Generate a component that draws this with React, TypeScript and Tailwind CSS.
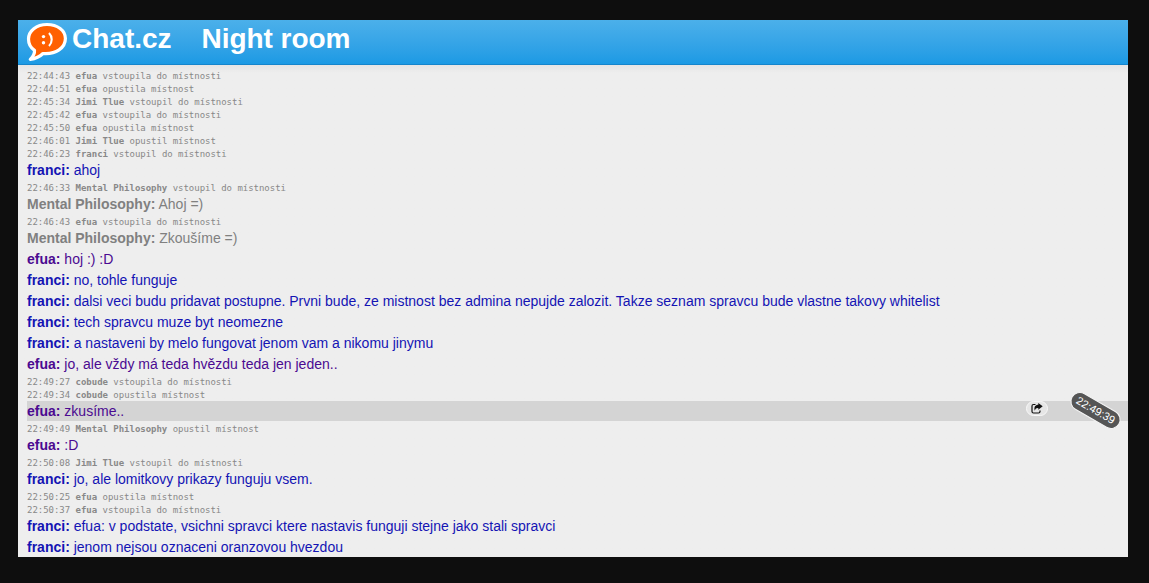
import clsx from 'clsx';

type SystemLine = { kind: 'system'; time: string; user: string; text: string };
type MessageLine = { kind: 'message'; user: string; text: string; time?: string; active?: boolean };
type Line = SystemLine | MessageLine;

const lines: Line[] = [
  { kind: 'system', time: '22:44:43', user: 'efua', text: 'vstoupila do místnosti' },
  { kind: 'system', time: '22:44:51', user: 'efua', text: 'opustila místnost' },
  { kind: 'system', time: '22:45:34', user: 'Jimi Tlue', text: 'vstoupil do místnosti' },
  { kind: 'system', time: '22:45:42', user: 'efua', text: 'vstoupila do místnosti' },
  { kind: 'system', time: '22:45:50', user: 'efua', text: 'opustila místnost' },
  { kind: 'system', time: '22:46:01', user: 'Jimi Tlue', text: 'opustil místnost' },
  { kind: 'system', time: '22:46:23', user: 'franci', text: 'vstoupil do místnosti' },
  { kind: 'message', user: 'franci', text: 'ahoj' },
  { kind: 'system', time: '22:46:33', user: 'Mental Philosophy', text: 'vstoupil do místnosti' },
  { kind: 'message', user: 'Mental Philosophy', text: 'Ahoj =)' },
  { kind: 'system', time: '22:46:43', user: 'efua', text: 'vstoupila do místnosti' },
  { kind: 'message', user: 'Mental Philosophy', text: 'Zkoušíme =)' },
  { kind: 'message', user: 'efua', text: 'hoj :) :D' },
  { kind: 'message', user: 'franci', text: 'no, tohle funguje' },
  {
    kind: 'message',
    user: 'franci',
    text: 'dalsi veci budu pridavat postupne. Prvni bude, ze mistnost bez admina nepujde zalozit. Takze seznam spravcu bude vlastne takovy whitelist',
  },
  { kind: 'message', user: 'franci', text: 'tech spravcu muze byt neomezne' },
  { kind: 'message', user: 'franci', text: 'a nastaveni by melo fungovat jenom vam a nikomu jinymu' },
  { kind: 'message', user: 'efua', text: 'jo, ale vždy má teda hvězdu teda jen jeden..' },
  { kind: 'system', time: '22:49:27', user: 'cobude', text: 'vstoupila do místnosti' },
  { kind: 'system', time: '22:49:34', user: 'cobude', text: 'opustila místnost' },
  { kind: 'message', user: 'efua', text: 'zkusíme..', time: '22:49:39', active: true },
  { kind: 'system', time: '22:49:49', user: 'Mental Philosophy', text: 'opustil místnost' },
  { kind: 'message', user: 'efua', text: ':D' },
  { kind: 'system', time: '22:50:08', user: 'Jimi Tlue', text: 'vstoupil do místnosti' },
  { kind: 'message', user: 'franci', text: 'jo, ale lomitkovy prikazy funguju vsem.' },
  { kind: 'system', time: '22:50:25', user: 'efua', text: 'opustila místnost' },
  { kind: 'system', time: '22:50:37', user: 'efua', text: 'vstoupila do místnosti' },
  { kind: 'message', user: 'franci', text: 'efua: v podstate, vsichni spravci ktere nastavis funguji stejne jako stali spravci' },
  { kind: 'message', user: 'franci', text: 'jenom nejsou oznaceni oranzovou hvezdou' },
];

const userColors: Record<string, string> = {
  franci: 'text-[#1414b4]',
  efua: 'text-[#4b0a91]',
  'Mental Philosophy': 'text-[#808080]',
};

const Logo = () => (
  <svg className="h-10 w-[42px] shrink-0" viewBox="0 0 42 40" fill="none">
    <path
      d="M21 2.5C10.500 2.500 2.500 8.700 2.500 17C2.500 22 5 26 8.500 28.400C8.800 31.500 7.200 34.500 4.300 37.300C9.500 36.600 14 34.500 17 31.500C30 32.500 39.400 26 39.400 16.600C39.400 8.400 31.500 2.500 21 2.500Z"
      fill="#ff6000"
      stroke="#fff"
      strokeWidth="3.200"
      strokeLinejoin="round"
    />
    <circle cx="17.500" cy="14.600" r="1.700" fill="#fff" />
    <circle cx="17.500" cy="20.800" r="1.700" fill="#fff" />
    <path d="M23 11C26.600 14.500 26.600 20.500 23 24" stroke="#fff" strokeWidth="2.100" />
  </svg>
);

const ShareIcon = () => (
  <svg className="h-[11px] w-[12px]" viewBox="0 0 12 11" fill="none">
    <path d="M4.500 1.500H2.500Q1 1.500 1 3V8.500Q1 10 2.500 10H7.500Q9 10 9 8.500V7.500" stroke="#111" strokeWidth="1.200" />
    <path d="M7.300 0L11.700 3.300L7.300 6.800V4.900C5.500 4.800 4.400 5.400 3.800 7.800C2.600 4 4.300 1.800 7.300 1.800Z" fill="#111" />
  </svg>
);

const SystemRow = ({ line }: { line: SystemLine }) => (
  <div className="h-[13px] shrink-0 whitespace-pre font-['DejaVu_Sans_Mono',monospace] text-[9px] leading-[14px] tracking-[-0.025px] text-[#888]">
    {line.time} <b>{line.user}</b> {line.text}
  </div>
);

const MessageRow = ({ line }: { line: MessageLine }) => (
  <div
    className={clsx(
      'relative mb-px h-5 shrink-0 whitespace-nowrap text-sm leading-[21px]',
      userColors[line.user],
      line.active && 'bg-[#d4d4d4]',
    )}
  >
    <b>{line.user}:</b> {line.text}
    {line.active && (
      <>
        <button className="absolute right-[80px] top-0 flex h-[15px] w-[22px] items-center justify-center rounded-full border border-[#f8f8f8] bg-[#e6e6e6]">
          <ShareIcon />
        </button>
        <span className="absolute right-[5px] top-0 flex h-[19px] w-[55px] rotate-[30deg] items-center justify-center rounded-full border border-[#f4f4f4] bg-[#555] text-[11px] text-white">
          {line.time}
        </span>
      </>
    )}
  </div>
);

const App = () => {
  return (
    <div className="h-[583px] w-[1149px] overflow-hidden bg-[#0e0e0e] pl-[18px] pt-5 font-['Liberation_Sans',Arial,sans-serif]">
      <div className="flex h-[537px] w-[1110px] flex-col overflow-hidden bg-[#eee]">
        <header className="flex h-[45px] shrink-0 border-b border-[#1585cc] bg-linear-to-b from-[#4bb0ea] to-[#1b9ae4] pl-2 pt-0.5 text-white">
          <Logo />
          <h1 className="ml-1 flex gap-[30px] text-[28px] font-bold leading-[33px]">
            <span>Chat.cz</span>
            <span className="tracking-[-0.05px]">Night room</span>
          </h1>
        </header>
        <main className="flex min-h-0 flex-1 flex-col bg-linear-to-b from-[#e5e5e5] to-[#eee] to-[8px] pl-[9px] pt-1">
          {lines.map((line, i) =>
            line.kind === 'system' ? <SystemRow key={i} line={line} /> : <MessageRow key={i} line={line} />,
          )}
        </main>
      </div>
    </div>
  );
};

export default App;
